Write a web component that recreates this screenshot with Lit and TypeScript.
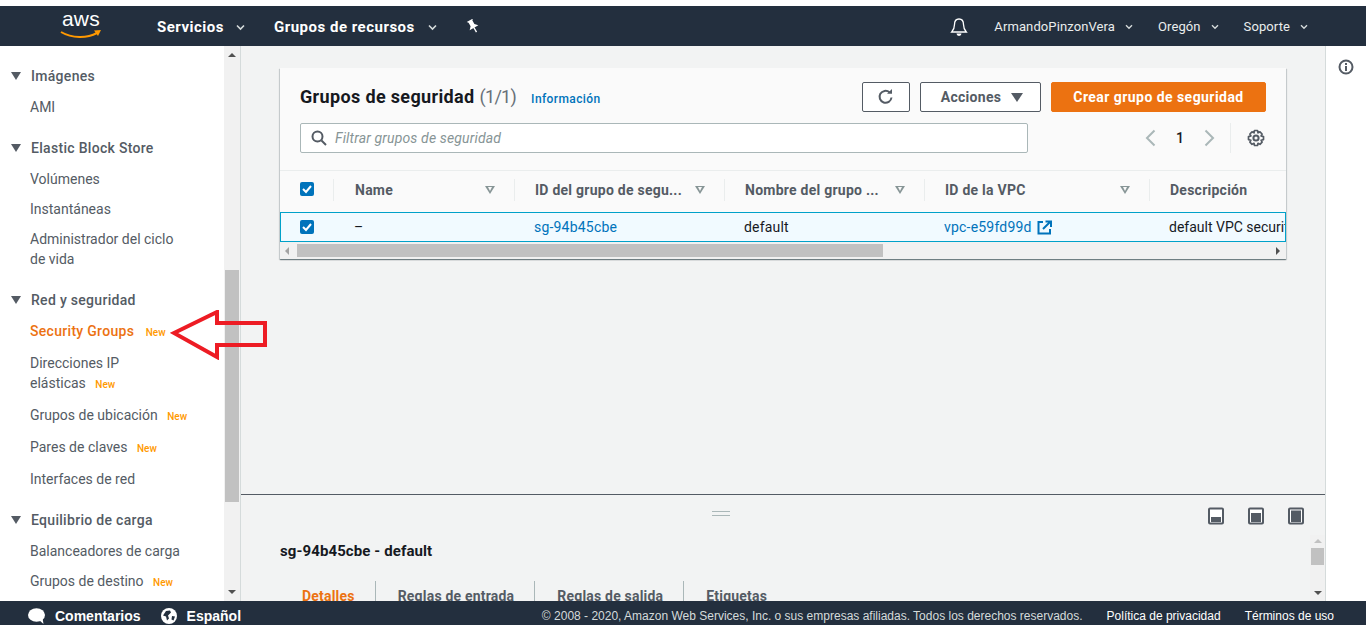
import { css, html, LitElement, svg } from 'lit';
import { customElement } from 'lit/decorators.js';

interface NavItem {
  label: string;
  isNew?: boolean;
  active?: boolean;
}

interface NavSection {
  title: string;
  tall?: boolean;
  items: NavItem[];
}

const sections: NavSection[] = [
  { title: 'Imágenes', items: [{ label: 'AMI' }] },
  {
    title: 'Elastic Block Store',
    items: [
      { label: 'Volúmenes' },
      { label: 'Instantáneas' },
      { label: 'Administrador del ciclo\nde vida' },
    ],
  },
  {
    title: 'Red y seguridad',
    tall: true,
    items: [
      { label: 'Security Groups', isNew: true, active: true },
      { label: 'Direcciones IP\nelásticas', isNew: true },
      { label: 'Grupos de ubicación', isNew: true },
      { label: 'Pares de claves', isNew: true },
      { label: 'Interfaces de red' },
    ],
  },
  {
    title: 'Equilibrio de carga',
    items: [
      { label: 'Balanceadores de carga' },
      { label: 'Grupos de destino', isNew: true },
    ],
  },
];

const columns = [
  { label: 'Name', width: 180 },
  { label: 'ID del grupo de segu...', width: 210 },
  { label: 'Nombre del grupo ...', width: 200 },
  { label: 'ID de la VPC', width: 225 },
  { label: 'Descripción', width: 200, noSort: true },
];

const chevron = svg`<path d="M1 1.500l3.500 3.500L8 1.500" fill="none" stroke="currentColor" stroke-width="1.600"/>`;

@customElement('app-root')
export class AppRoot extends LitElement {
  static override styles = css`
    :host {
      display: flex;
      flex-direction: column;
      height: 625px;
      overflow: hidden;
      background: #fff;
      font-family: Roboto, 'Noto Sans', sans-serif;
      font-size: 14px;
      line-height: 20px;
      color: #16191f;
    }
    svg {
      display: block;
      flex: none;
    }

    /* top bar */
    .nav {
      margin-top: 6px;
      height: 40px;
      flex: none;
      background: #232f3e;
      color: #fff;
      display: flex;
      align-items: center;
      padding-left: 60px;
    }
    .logo {
      width: 42px;
      height: 36px;
      position: relative;
      margin-right: 55px;
    }
    .logo span {
      display: block;
      text-align: center;
      font-family: 'Liberation Sans', sans-serif;
      font-size: 21px;
      line-height: 22px;
      letter-spacing: 0.3px;
    }
    .logo svg {
      position: absolute;
      left: 0;
      top: 21px;
    }
    .nav-main {
      font-size: 15px;
      font-weight: 700;
      letter-spacing: 0.5px;
      display: flex;
      align-items: center;
      gap: 13px;
      margin-top: 1px;
    }
    .nav-main svg {
      color: #d5dbdb;
      margin-top: 1px;
    }
    .nav-main.first {
      gap: 12px;
      margin-right: 29px;
    }
    .pin {
      margin-left: 29px;
    }
    .nav-right {
      margin-left: auto;
      display: flex;
      align-items: center;
      font-size: 13px;
      letter-spacing: 0.1px;
      color: #eaeded;
      margin-top: 1px;
    }
    .nav-right .bell {
      margin-right: 26px;
    }
    .nav-link {
      display: flex;
      align-items: center;
      gap: 10px;
      margin-right: 25px;
    }
    .nav-link svg {
      width: 8px;
      color: #d5dbdb;
    }
    .nav-right .nav-link:last-child {
      margin-right: 58px;
    }

    /* body */
    .body {
      flex: 1;
      min-height: 0;
      display: flex;
    }
    .side {
      width: 224px;
      flex: none;
      overflow: hidden;
      padding-top: 20px;
      box-sizing: border-box;
      color: #545b64;
    }
    .section {
      margin-bottom: 16px;
    }
    .sec-title {
      display: flex;
      align-items: center;
      gap: 10px;
      padding-left: 11px;
      margin-bottom: 6px;
      font-weight: 500;
      letter-spacing: 0.3px;
    }
    .tri {
      width: 0;
      height: 0;
      border-left: 5.5px solid transparent;
      border-right: 5.5px solid transparent;
      border-top: 8px solid #545b64;
    }
    .list {
      display: flex;
      flex-direction: column;
    }
    .tall .list {
      gap: 2px;
    }
    .item {
      padding: 5px 10px 5px 30px;
      white-space: pre-line;
    }
    .item.active {
      color: #ec7211;
      font-weight: 500;
      letter-spacing: 0.3px;
    }
    .badge {
      color: #ff9900;
      font-size: 10px;
      font-weight: 500;
      line-height: 1;
      margin-left: 7px;
      letter-spacing: 0;
    }
    .item.active .badge {
      margin-left: 9px;
    }

    .scroll-v {
      width: 16px;
      flex: none;
      background: #f1f1f1;
      position: relative;
      border-right: 1px solid #d5dbdb;
    }
    .thumb {
      position: absolute;
      background: #c1c1c1;
    }
    .side-scroll .thumb {
      left: 1px;
      width: 14px;
      top: 224px;
      height: 232px;
    }
    .arrow-up,
    .arrow-down {
      position: absolute;
      width: 0;
      height: 0;
      border-left: 4px solid transparent;
      border-right: 4px solid transparent;
    }
    .arrow-up {
      top: 7px;
      left: 4px;
      border-bottom: 4px solid #505050;
    }
    .arrow-down {
      bottom: 7px;
      left: 4px;
      border-top: 4px solid #505050;
    }

    .main {
      flex: 1;
      min-width: 0;
      display: flex;
      flex-direction: column;
      background: #f2f3f3;
    }
    .content {
      flex: 1;
      min-height: 0;
      padding: 22px 39px 0;
    }
    .card {
      background: #fafafa;
      box-shadow: 0 1px 1px rgba(0, 28, 36, 0.4), 1px 1px 1px rgba(0, 28, 36, 0.12),
        -1px 1px 1px rgba(0, 28, 36, 0.12);
      overflow: hidden;
    }
    .card-head {
      height: 103px;
      box-sizing: border-box;
      padding: 14px 20px 0;
      border-bottom: 1px solid #eaeded;
    }
    .head-row {
      display: flex;
      align-items: center;
      height: 30px;
    }
    .title {
      font-size: 18px;
      font-weight: 700;
      letter-spacing: 0.35px;
    }
    .count {
      font-weight: 400;
      color: #687078;
      margin-left: 5px;
      letter-spacing: -0.7px;
    }
    .info {
      color: #0073bb;
      font-size: 12px;
      font-weight: 500;
      margin-left: 15px;
      margin-top: 3px;
      letter-spacing: 0.4px;
    }
    .actions {
      margin-left: auto;
      display: flex;
      gap: 10px;
    }
    .btn {
      height: 30px;
      box-sizing: border-box;
      border: 1px solid #545b64;
      border-radius: 2px;
      background: #fff;
      color: #545b64;
      font: inherit;
      font-weight: 700;
      display: flex;
      align-items: center;
      justify-content: center;
      padding: 0;
    }
    .btn.refresh {
      width: 48px;
    }
    .btn.acciones {
      width: 121px;
      gap: 10px;
      padding-left: 3px;
      letter-spacing: 0.3px;
    }
    .btn.acciones .tri {
      border-left-width: 6px;
      border-right-width: 6px;
      border-top-width: 9px;
    }
    .btn.primary {
      width: 215px;
      background: #ec7211;
      border-color: #ec7211;
      color: #fff;
      letter-spacing: 0.45px;
    }
    .filter-row {
      display: flex;
      align-items: center;
      margin-top: 11px;
      height: 30px;
    }
    .filter {
      width: 728px;
      height: 30px;
      box-sizing: border-box;
      background: #fff;
      border: 1px solid #aab7b8;
      border-radius: 2px;
      display: flex;
      align-items: center;
      gap: 8px;
      padding-left: 10px;
      color: #879596;
      font-style: italic;
      letter-spacing: 0.15px;
    }
    .pager {
      margin-left: auto;
      display: flex;
      align-items: center;
      color: #aab7b8;
      margin-right: 1px;
    }
    .pager .num {
      color: #16191f;
      font-weight: 500;
      width: 30px;
      text-align: center;
    }
    .pager .first-arrow {
      margin-right: 9px;
    }
    .pager .last-arrow {
      margin-left: 9px;
    }
    .pager .div {
      width: 1px;
      height: 30px;
      background: #eaeded;
      margin: 0 16px 0 15px;
    }

    .table {
      overflow: hidden;
    }
    .tr {
      display: flex;
      width: max-content;
    }
    .th {
      height: 40px;
      display: flex;
      align-items: center;
      box-sizing: border-box;
      padding: 0 16px 2px 20px;
      justify-content: space-between;
      color: #545b64;
      font-weight: 700;
      letter-spacing: 0.25px;
      position: relative;
    }
    .th::after {
      content: '';
      position: absolute;
      right: 0;
      top: 8px;
      bottom: 10px;
      width: 1px;
      background: #eaeded;
    }
    .th.no-sep::after {
      display: none;
    }
    .th .sort {
      width: 0;
      height: 0;
      border-left: 5px solid transparent;
      border-right: 5px solid transparent;
      border-top: 8px solid #879596;
      position: relative;
      margin-right: 4px;
    }
    .th .sort::after {
      content: '';
      position: absolute;
      left: -2.5px;
      top: -7px;
      border-left: 2.5px solid transparent;
      border-right: 2.5px solid transparent;
      border-top: 4px solid #fafafa;
    }
    .check-col {
      width: 54px;
      flex: none;
      box-sizing: border-box;
      padding-left: 20px;
      display: flex;
      align-items: center;
    }
    .th.check-col {
      width: 55px;
      padding: 0 0 4px 20px;
      justify-content: flex-start;
    }
    .th.check-col::after {
      right: 1px;
    }
    .check {
      width: 14px;
      height: 14px;
      border-radius: 2px;
      background: #0073bb;
      display: flex;
      align-items: center;
      justify-content: center;
    }
    .selected {
      height: 30px;
      box-sizing: border-box;
      border: 1px solid #00a1c9;
      background: #f1faff;
      display: flex;
      overflow: hidden;
      margin-top: 1px;
    }
    .selected .check-col {
      padding-left: 19px;
    }
    .td {
      padding-left: 19px;
      display: flex;
      align-items: center;
      flex: none;
      box-sizing: border-box;
      gap: 5px;
      white-space: nowrap;
      letter-spacing: 0.2px;
    }
    .td.plain {
      letter-spacing: 0;
    }
    .link {
      color: #0073bb;
    }
    .scroll-h {
      height: 17px;
      background: #f1f1f1;
      position: relative;
    }
    .scroll-h .thumb {
      left: 17px;
      width: 586px;
      top: 2px;
      height: 13px;
    }
    .arrow-left,
    .arrow-right {
      position: absolute;
      top: 5px;
      width: 0;
      height: 0;
      border-top: 4px solid transparent;
      border-bottom: 4px solid transparent;
    }
    .arrow-left {
      left: 5px;
      border-right: 4px solid #a3a3a3;
    }
    .arrow-right {
      right: 6px;
      border-left: 4px solid #505050;
    }

    /* split panel */
    .split {
      height: 107px;
      flex: none;
      box-sizing: border-box;
      border-top: 1px solid #545b64;
      position: relative;
      overflow: hidden;
      display: flex;
      flex-direction: column;
    }
    .split-top {
      height: 40px;
      box-sizing: border-box;
      padding: 2px 20px 0 0;
      display: flex;
      align-items: center;
      justify-content: flex-end;
      gap: 22px;
      position: relative;
      flex: none;
    }
    .handle {
      position: absolute;
      left: 471px;
      top: 16px;
      width: 18px;
      height: 5px;
      border-top: 1px solid #aab7b8;
      border-bottom: 1px solid #aab7b8;
      box-sizing: border-box;
    }
    .pane-icon {
      width: 18px;
      height: 18px;
    }
    .split-title {
      margin: 6px 0 0 39px;
      font-size: 15px;
      font-weight: 700;
      height: 20px;
      letter-spacing: 0.1px;
    }
    .tabs {
      display: flex;
      margin: 20px 0 0 39px;
      height: 30px;
      flex: none;
    }
    .tab {
      padding: 5px 20px 0 22px;
      color: #545b64;
      font-weight: 700;
      white-space: nowrap;
      border-left: 1px solid #aab7b8;
      letter-spacing: 0.2px;
    }
    .tab.on {
      color: #ec7211;
      border-left: 0;
      padding-right: 20px;
    }
    .split-scroll {
      position: absolute;
      right: 0;
      top: 40px;
      bottom: 0;
      width: 15px;
      background: #f1f1f1;
    }
    .split-scroll .thumb {
      left: 1px;
      right: 1px;
      top: 13px;
      height: 17px;
    }
    .split-scroll .arrow-up {
      left: 4px;
      top: 4px;
      border-bottom-color: #c1c1c1;
    }
    .split-scroll .arrow-down {
      left: 4px;
      bottom: 6px;
    }

    .rail {
      width: 41px;
      flex: none;
      box-sizing: border-box;
      border-left: 1px solid #d5dbdb;
      padding: 13px 0 0 12px;
      background: #fff;
    }

    /* footer */
    .footer {
      height: 24px;
      flex: none;
      box-sizing: border-box;
      padding: 6px 0 0 28px;
      background: #232f3e;
      color: #fff;
      display: flex;
      align-items: center;
      font-family: 'Liberation Sans', sans-serif;
      font-size: 12px;
      line-height: 16px;
      white-space: nowrap;
    }
    .foot-main {
      display: flex;
      flex: none;
      align-items: center;
      font-size: 14px;
      font-weight: 700;
      gap: 10px;
    }
    .foot-main.lang {
      margin-left: 20px;
    }
    .copy {
      margin-left: auto;
      color: #d5dbdb;
    }
    .foot-link {
      margin-left: 24px;
    }
    .foot-link:last-child {
      margin-right: 32px;
    }

    /* red annotation arrow drawn over the page */
    .annotation {
      position: absolute;
      left: 170px;
      top: 310px;
    }
  `;

  private check() {
    return html`<span class="check">
      <svg width="10" height="10" viewBox="0 0 10 10">
        <path d="M1 5l3 3 5-6" fill="none" stroke="#fff" stroke-width="2" />
      </svg>
    </span>`;
  }

  private paneIcon(top: number) {
    return html`<svg class="pane-icon" viewBox="0 0 18 18">
      <rect x="2" y="1.500" width="14" height="15" rx="1" fill="#fff" stroke="#545b64" stroke-width="2" />
      <rect x="4" y=${top} width="10" height=${14 - top + 1} fill="#545b64" />
    </svg>`;
  }

  private renderTop() {
    return html`<header class="nav">
      <div class="logo">
        <span>aws</span>
        <svg width="42" height="12" viewBox="0 0 42 12">
          <path d="M1 3c11 6.500 26 6.500 36 1" fill="none" stroke="#f90" stroke-width="2" />
          <path d="M34 1.500l7-.5-3 6z" fill="#f90" />
        </svg>
      </div>
      <div class="nav-main first">
        Servicios <svg width="9" height="7" viewBox="0 0 9 7">${chevron}</svg>
      </div>
      <div class="nav-main">
        Grupos de recursos <svg width="9" height="7" viewBox="0 0 9 7">${chevron}</svg>
      </div>
      <svg class="pin" width="14" height="14" viewBox="0 0 14 14">
        <g transform="rotate(-30 7 7)">
          <path d="M3.500 .5h7l-1.300 1.500v4l2.800 3H2l2.800-3v-4zM6.300 9h1.400v5H6.300z" fill="#fff" />
        </g>
      </svg>
      <div class="nav-right">
        <svg class="bell" width="18" height="20" viewBox="0 0 18 20">
          <path
            d="M9 2c-3.300 0-4.500 2.500-4.500 5.500 0 3-1 5.500-2.800 7.500h14.600c-1.800-2-2.800-4.500-2.800-7.500C13.500 4.500 12.300 2 9 2z"
            fill="none"
            stroke="#fff"
            stroke-width="1.300"
          />
          <path d="M6.500 16.500a2.500 2.500 0 0 0 5 0z" fill="#fff" />
        </svg>
        <div class="nav-link">ArmandoPinzonVera <svg viewBox="0 0 9 7" height="6">${chevron}</svg></div>
        <div class="nav-link">Oregón <svg viewBox="0 0 9 7" height="6">${chevron}</svg></div>
        <div class="nav-link">Soporte <svg viewBox="0 0 9 7" height="6">${chevron}</svg></div>
      </div>
    </header>`;
  }

  private renderSide() {
    return html`<nav class="side">
      ${sections.map(
        (s) => html`<div class="section ${s.tall ? 'tall' : ''}">
          <div class="sec-title"><span class="tri"></span>${s.title}</div>
          <div class="list">
            ${s.items.map(
              (i) => html`<div class="item ${i.active ? 'active' : ''}">${i.label}${i.isNew ? html`<span class="badge"> New</span>` : ''}</div>`
            )}
          </div>
        </div>`
      )}
    </nav>
    <div class="scroll-v side-scroll">
      <span class="arrow-up"></span><span class="thumb"></span><span class="arrow-down"></span>
    </div>`;
  }

  private renderCard() {
    return html`<section class="card">
      <div class="card-head">
        <div class="head-row">
          <span class="title">Grupos de seguridad<span class="count">(1/1)</span></span>
          <span class="info">Información</span>
          <div class="actions">
            <button class="btn refresh">
              <svg width="18" height="18" viewBox="0 0 18 18">
                <path d="M14.500 9.500a6 6 0 1 1-2-5.200" fill="none" stroke="#545b64" stroke-width="2" />
                <path d="M10 5.800h5V1z" fill="#545b64" />
              </svg>
            </button>
            <button class="btn acciones">Acciones <span class="tri"></span></button>
            <button class="btn primary">Crear grupo de seguridad</button>
          </div>
        </div>
        <div class="filter-row">
          <div class="filter">
            <svg width="16" height="16" viewBox="0 0 16 16">
              <circle cx="6.500" cy="6.500" r="5" fill="none" stroke="#545b64" stroke-width="2" />
              <path d="M10.500 10.500l4.500 4.500" stroke="#545b64" stroke-width="2" />
            </svg>
            Filtrar grupos de seguridad
          </div>
          <div class="pager">
            <svg class="first-arrow" width="11" height="18" viewBox="0 0 11 18">
              <path d="M9.500 1.500L2 9l7.500 7.500" fill="none" stroke="currentColor" stroke-width="2" />
            </svg>
            <span class="num">1</span>
            <svg class="last-arrow" width="11" height="18" viewBox="0 0 11 18">
              <path d="M1.500 1.500L9 9l-7.500 7.500" fill="none" stroke="currentColor" stroke-width="2" />
            </svg>
            <span class="div"></span>
            <svg width="18" height="18" viewBox="0 0 18 18">
              <circle cx="9" cy="9" r="2.600" fill="none" stroke="#545b64" stroke-width="2" />
              <path
                d="M7.500 1.500h3l.5 2.300 2-.9 2.100 2.100-1 2 2.400.6v3l-2.400.6 1 2-2.100 2.100-2-1-.5 2.200h-3l-.5-2.200-2 1-2.100-2.100 1-2-2.400-.6v-3L3.900 7l-1-2L5 2.900l2 .9z"
                fill="none"
                stroke="#545b64"
                stroke-width="1.700"
                stroke-linejoin="round"
              />
            </svg>
          </div>
        </div>
      </div>
      <div class="table">
        <div class="tr">
          <div class="th check-col">${this.check()}</div>
          ${columns.map(
            (c) => html`<div class="th ${c.noSort ? 'no-sep' : ''}" style="width:${c.width}px">
              <span>${c.label}</span>${c.noSort ? '' : html`<span class="sort"></span>`}
            </div>`
          )}
        </div>
        <div class="selected">
          <div class="check-col">${this.check()}</div>
          <div class="td" style="width:180px">–</div>
          <div class="td link" style="width:210px">sg-94b45cbe</div>
          <div class="td" style="width:200px">default</div>
          <div class="td link" style="width:225px">
            vpc-e59fd99d
            <svg width="15" height="15" viewBox="0 0 15 15">
              <path d="M6 2H1.500v11.500H13V9" fill="none" stroke="#0073bb" stroke-width="2" />
              <path d="M6 9l7-7M8.500 1.500h5.500V7" fill="none" stroke="#0073bb" stroke-width="2" />
            </svg>
          </div>
          <div class="td plain">default VPC security group</div>
        </div>
        <div class="scroll-h">
          <span class="arrow-left"></span><span class="thumb"></span><span class="arrow-right"></span>
        </div>
      </div>
    </section>`;
  }

  private renderSplit() {
    return html`<section class="split">
      <div class="split-top">
        <span class="handle"></span>
        ${this.paneIcon(10)} ${this.paneIcon(6)} ${this.paneIcon(3.500)}
      </div>
      <div class="split-title">sg-94b45cbe - default</div>
      <div class="tabs">
        <div class="tab on">Detalles</div>
        <div class="tab">Reglas de entrada</div>
        <div class="tab">Reglas de salida</div>
        <div class="tab">Etiquetas</div>
      </div>
      <div class="split-scroll">
        <span class="arrow-up"></span><span class="thumb"></span><span class="arrow-down"></span>
      </div>
    </section>`;
  }

  private renderFooter() {
    return html`<footer class="footer">
      <div class="foot-main">
        <svg width="17" height="16" viewBox="0 0 17 16">
          <ellipse cx="8.500" cy="7" rx="8.500" ry="6.800" fill="#fff" />
          <path d="M11 12l4.500 4-1-6z" fill="#fff" />
        </svg>
        Comentarios
      </div>
      <div class="foot-main lang">
        <svg width="16" height="16" viewBox="0 0 16 16">
          <circle cx="8" cy="8" r="8" fill="#fff" />
          <path d="M5 3l4-.5 1 2-3 3 1 3-2 2-1-4-3-1zM11 8l3 .5-1.500 4-2-1z" fill="#232f3e" />
        </svg>
        Español
      </div>
      <span class="copy">© 2008 - 2020, Amazon Web Services, Inc. o sus empresas afiliadas. Todos los derechos reservados.</span>
      <span class="foot-link">Política de privacidad</span>
      <span class="foot-link">Términos de uso</span>
    </footer>`;
  }

  override render() {
    return html`
      ${this.renderTop()}
      <div class="body">
        ${this.renderSide()}
        <main class="main">
          <div class="content">${this.renderCard()}</div>
          ${this.renderSplit()}
        </main>
        <aside class="rail">
          <svg width="16" height="16" viewBox="0 0 16 16">
            <circle cx="8" cy="8" r="6.500" fill="none" stroke="#545b64" stroke-width="2" />
            <rect x="7" y="7" width="2" height="5" fill="#545b64" />
            <rect x="7" y="4" width="2" height="2" fill="#545b64" />
          </svg>
        </aside>
      </div>
      ${this.renderFooter()}
      <svg class="annotation" width="100" height="50" viewBox="0 0 100 50">
        <path d="M4 23L47 2v11h48v22H47v12z" fill="none" stroke="#ed1c24" stroke-width="4" />
      </svg>
    `;
  }
}
